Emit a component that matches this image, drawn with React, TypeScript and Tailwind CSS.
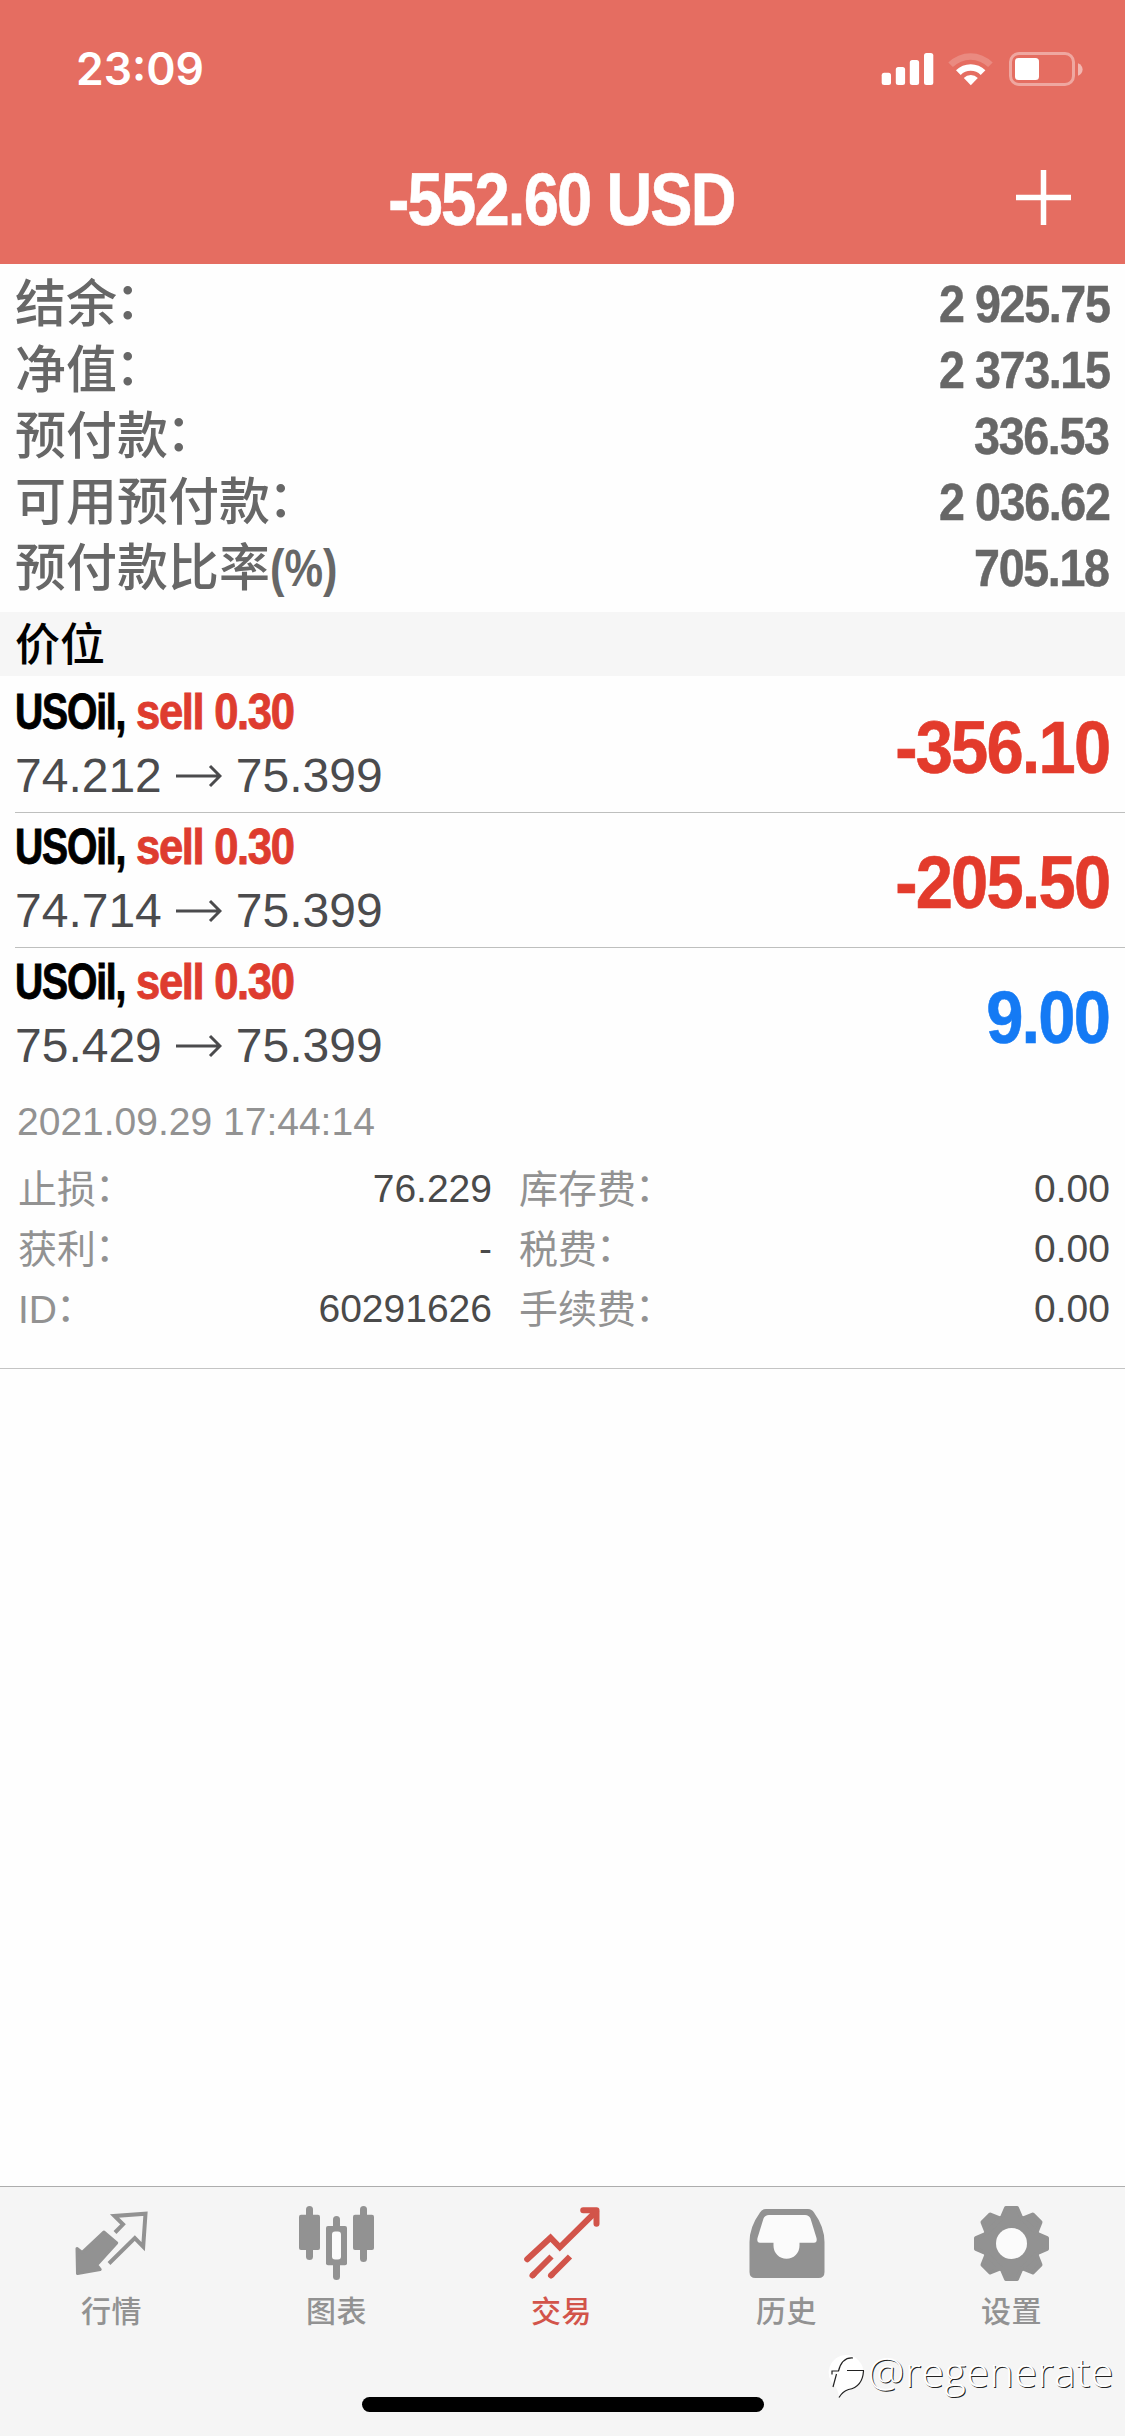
import type { ReactNode } from 'react';
import clsx from 'clsx';

interface Position {
  symbol: string;
  side: string;
  open: string;
  current: string;
  profit: string;
}

const SUMMARY = [
  { label: '结余', value: '2 925.75' },
  { label: '净值', value: '2 373.15' },
  { label: '预付款', value: '336.53' },
  { label: '可用预付款', value: '2 036.62' },
  { label: '预付款比率', suffix: '(%)', value: '705.18' },
];

const POSITIONS: Position[] = [
  { symbol: 'USOil,', side: 'sell 0.30', open: '74.212', current: '75.399', profit: '-356.10' },
  { symbol: 'USOil,', side: 'sell 0.30', open: '74.714', current: '75.399', profit: '-205.50' },
  { symbol: 'USOil,', side: 'sell 0.30', open: '75.429', current: '75.399', profit: '9.00' },
];

const DETAILS = [
  ['止损', '76.229', '库存费', '0.00'],
  ['获利', '-', '税费', '0.00'],
  ['ID', '60291626', '手续费', '0.00'],
];

const GEAR_ANGLES = [0, 45, 90, 135, 180, 225, 270, 315];

function StatusBar() {
  return (
    <div className="flex h-[132px] items-start justify-between pt-[41px] pr-[42px] pl-[76px]">
      <span className="mt-px font-[Inter] text-[44.5px] leading-[54px] font-semibold">23:09</span>
      <svg className="mt-[9px]" width="202" height="38" viewBox="881 50 202 38" fill="currentColor">
        <rect x="881.7" y="72.7" width="9.3" height="12.3" rx="2.5" />
        <rect x="895.8" y="67" width="9.3" height="18" rx="2.5" />
        <rect x="909.8" y="60" width="9.3" height="25" rx="2.5" />
        <rect x="924" y="53" width="9.3" height="32" rx="2.5" />
        <path d="M948.3 62.500a31.500 31.500 0 0 1 44.400 0l-4.600 4.600a25 25 0 0 0-35.200 0z" opacity="0.2" />
        <path d="M956 70.300a20.600 20.600 0 0 1 29.400 0l-4.700 4.700a14 14 0 0 0-20 0z" />
        <path d="M963.800 78a9.800 9.800 0 0 1 14 0l-7 7.200z" />
        <rect x="1010.5" y="53.5" width="63" height="31" rx="8.5" fill="none" stroke="currentColor" strokeWidth="3" opacity="0.4" />
        <rect x="1015" y="58" width="24" height="22" rx="3.5" />
        <path d="M1078 63.300c2.800 1 4.600 3.500 4.600 6.200s-1.800 5.200-4.600 6.200z" opacity="0.5" />
      </svg>
    </div>
  );
}

function SummaryRow({ label, suffix, value }: { label: string; suffix?: string; value: string }) {
  return (
    <div className="flex h-[66px] items-center justify-between">
      <span className="flex pt-[4px] text-[51px] leading-[66px] font-medium">
        {label}
        {suffix ? (
          <span className="origin-left scale-x-[0.85] font-bold">{suffix}</span>
        ) : (
          <span className="-mt-[3px] -ml-[2px]">：</span>
        )}
      </span>
      <span className="origin-right scale-x-[0.905] pt-px text-[51.5px] leading-[66px] font-bold tracking-[-1.5px] [-webkit-text-stroke:0.5px]">
        {value}
      </span>
    </div>
  );
}

function PositionRow({ position, divider }: { position: Position; divider: boolean }) {
  const isLoss = position.profit.startsWith('-');
  return (
    <div className={clsx('ml-[15px] flex h-[135px] justify-between pr-[16px]', divider && 'border-b border-[#bebfbe]')}>
      <div>
        <div className="flex pt-[2px] text-[49.5px] leading-[64px] font-bold tracking-[-1.5px] [-webkit-text-stroke:0.9px]">
          <span className="w-[121px] origin-left scale-x-[0.79] text-black">{position.symbol}</span>
          <span className="origin-left scale-x-[0.88] whitespace-nowrap text-[#de3c2f]">{position.side}</span>
        </div>
        <div className="flex items-center pt-px text-[48px] leading-[62px] text-[#4b4b4d]">
          <span>{position.open}</span>
          <svg className="mx-[14px]" width="46" height="24" viewBox="0 0 46 24" fill="none" stroke="currentColor" strokeWidth="3">
            <path d="M0 12h44M34 2l10 10-10 10" />
          </svg>
          <span>{position.current}</span>
        </div>
      </div>
      <span
        className={clsx(
          'origin-right scale-x-[0.91] pt-[4px] text-[73.5px] leading-[132px] font-bold tracking-[-2px] [-webkit-text-stroke:0.6px]',
          isLoss ? 'text-[#e33b2c]' : 'text-[#147af4]'
        )}
      >
        {position.profit}
      </span>
    </div>
  );
}

function DetailLabel({ text }: { text: string }) {
  return (
    <span className="flex pt-px">
      {text}
      <span className="-mt-[2px] -ml-px">：</span>
    </span>
  );
}

function Tab({ label, active, children }: { label: string; active?: boolean; children: ReactNode }) {
  return (
    <div className={clsx('flex flex-1 flex-col items-center pt-[14px] pr-[2px]', active ? 'text-[#d2544a]' : 'text-[#929292]')}>
      <svg width="80" height="80" viewBox="0 0 80 80" fill="currentColor">
        {children}
      </svg>
      <span className="mt-[11px] text-[30px] leading-[40px] font-medium tracking-[0.5px]">{label}</span>
    </div>
  );
}

function TabBar() {
  return (
    <nav className="flex h-[250px] border-t border-[#adadad] bg-[#f5f5f5]">
      <Tab label="行情">
        <path
          d="M5 47.500l5 4L31.800 31l12.900 11-20 22 3.500 4.500L5.500 72.500z"
          stroke="currentColor"
          strokeWidth="3"
          strokeLinejoin="round"
        />
        <path d="M43 31.500l8-8.200-8.500-8.300 31-2.300-2.300 33-8.400-8.700L37 62.500" fill="none" stroke="currentColor" strokeWidth="4" />
      </Tab>
      <Tab label="图表">
        <rect x="2" y="13.7" width="21" height="35.3" rx="2" />
        <rect x="9" y="5" width="7" height="54" rx="3.5" />
        <rect x="56" y="13.7" width="21" height="35.3" rx="2" />
        <rect x="63" y="5" width="7" height="56" rx="3.5" />
        <rect x="36" y="15" width="7" height="64" rx="3.5" />
        <rect x="29" y="25" width="21" height="39.3" rx="2" />
        <rect x="35" y="30.5" width="9" height="28" rx="3" fill="#fbfbfb" />
      </Tab>
      <Tab label="交易" active>
        <g fill="none" stroke="currentColor" strokeWidth="6">
          <path d="M5.200 58.300l23.300-21.600 9.300 9.600L74 10.500" strokeLinecap="round" />
          <path d="M61.200 9.200h13.300v13.500" strokeLinecap="round" strokeLinejoin="round" />
          <path d="M10 75l19.500-19.500M28.500 75L48 55.500" />
          <path d="M10.500 74.500l1-1M29 74.500l1-1" strokeLinecap="round" />
        </g>
      </Tab>
      <Tab label="历史">
        <path d="M19 8h42q4 0 6 3.500Q77.500 26 77.500 41v30q0 6-6 6h-63q-6 0-6-6V41Q2.500 26 13 11.500 15 8 19 8z" />
        <path
          fill="#fbfbfb"
          d="M22 14h36q4 0 5.500 3.500l6 19.500q1 4.700-2.500 4.700H52.500v3a13 13 0 0 1-26 0v-3H13q-3.500 0-2.500-4.700l6-19.500Q18 14 22 14z"
        />
      </Tab>
      <Tab label="设置">
        <g transform="translate(39.5 42.5)">
          <circle r="29.5" />
          {GEAR_ANGLES.map((angle) => (
            <path
              key={angle}
              transform={`rotate(${angle})`}
              d="M-10-25l4.500-10.500h11L10-25z"
              stroke="currentColor"
              strokeWidth="4"
              strokeLinejoin="round"
            />
          ))}
          <circle r="15.500" fill="#fbfbfb" />
        </g>
      </Tab>
    </nav>
  );
}

export default function App() {
  return (
    <div className="relative flex h-[2436px] w-[1125px] flex-col overflow-hidden bg-[#fefefe] font-['Liberation_Sans','Noto_Sans_CJK_SC',sans-serif]">
      <header className="h-[264px] bg-[#e56d61] text-white">
        <StatusBar />
        <div className="flex h-[132px] items-center">
          <div className="w-[106px]" />
          <div className="flex flex-1 justify-center">
            <h1 className="scale-x-[0.86] pt-[4px] text-[73.5px] leading-[130px] font-bold tracking-[-2px] [-webkit-text-stroke:0.6px]">
              -552.60 USD
            </h1>
          </div>
          <svg className="mr-[54px] mb-[2px]" width="55" height="55" viewBox="0 0 55 55" stroke="currentColor" strokeWidth="5.500">
            <path d="M27.500 0v55M0 27.500h55" />
          </svg>
        </div>
      </header>

      <section className="h-[348px] pt-[6px] pr-[16px] pl-[15px] text-[#676767]">
        {SUMMARY.map((row) => (
          <SummaryRow key={row.label} {...row} />
        ))}
      </section>

      <h2 className="h-16 bg-[#f6f6f6] pt-[2px] pl-[15px] text-[45px] leading-[64px] font-medium text-black">价位</h2>

      <main className="flex-1 pt-[2px]">
        {POSITIONS.map((position, index) => (
          <PositionRow key={position.open} position={position} divider={index < POSITIONS.length - 1} />
        ))}
        <div className="h-[286px] border-b border-[#c4c4c4] pt-[9px] pr-[15px] pl-[17px] text-[39px] text-[#929292]">
          <p className="leading-[60px]">2021.09.29 17:44:14</p>
          <div className="pt-[7px] pl-px">
            {DETAILS.map(([label, value, feeLabel, fee]) => (
              <div key={label} className="flex h-[60px] leading-[60px]">
                <div className="flex-1">
                  <DetailLabel text={label} />
                </div>
                <span className="text-[#4a4a4a]">{value}</span>
                <div className="ml-[27px] w-[300px]">
                  <DetailLabel text={feeLabel} />
                </div>
                <span className="w-[291px] text-right text-[#4a4a4a]">{fee}</span>
              </div>
            ))}
          </div>
        </div>
      </main>

      <TabBar />

      <div className="absolute top-[2397px] left-[362px] h-[15px] w-[402px] rounded-full bg-black" />
      <div className="absolute top-[2345px] left-[820px] flex text-white">
        <svg width="48" height="56" viewBox="0 0 48 56">
          <path d="M26 10a17.500 17.500 0 0 1 0 35q-3 1-7 7-1-7-4-11A17.500 17.500 0 0 1 26 10z" fill="white" />
          <path
            d="M12 29.500v-3.500h6.500Q22 12 33 13M27 25.500h17M16.500 29L13 42M43.500 26q-1 16-15 18.500-6 2-9.500 8"
            fill="none"
            stroke="#222"
            strokeWidth="1.200"
          />
        </svg>
        <span className="-mt-[2px] font-['Open_Sans'] text-[41px] leading-[56px] font-light tracking-[0.6px] text-shadow-[1px_1px_0_#222]">
          @regenerate
        </span>
      </div>
    </div>
  );
}
